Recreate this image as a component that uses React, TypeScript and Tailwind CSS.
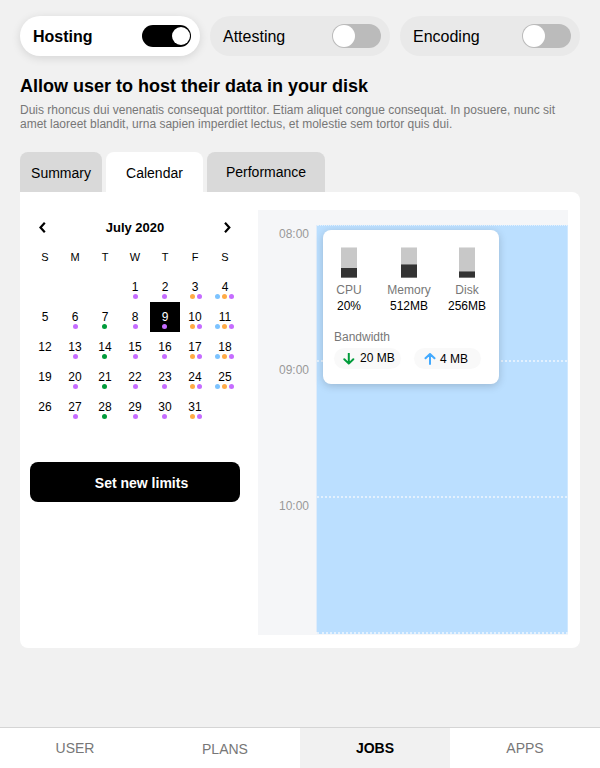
import React from "react";

const toggles = [
  { name: "Hosting", on: true },
  { name: "Attesting", on: false },
  { name: "Encoding", on: false },
];

const dotColors: Record<string, string> = {
  p: "bg-[#c56cff]",
  o: "bg-[#ffab45]",
  b: "bg-[#7cc3ff]",
  g: "bg-[#009b3a]",
};

// Dot codes per weekday, Sunday first
const weekdayDots = ["", "p", "g", "p", "p", "op", "bop"];
const dotIndent = ["", "pl-[13px]", "pl-3", "pl-[13px]", "pl-3", "pl-[10px]", "pl-[5px]"];

function Toggle({ name, on }: { name: string; on: boolean }) {
  return (
    <div
      className={`flex h-10 w-[180px] items-center rounded-full pl-[13px] text-[16px] ${
        on ? "bg-white font-bold shadow-[0_2px_10px_rgba(0,0,0,0.12)]" : "bg-[#e9e9e9]"
      }`}
    >
      <span className="flex-1 pt-px">{name}</span>
      {on ? (
        <span className="mr-[9px] flex h-[22px] w-[49px] items-center justify-end rounded-full bg-black pr-px">
          <span className="size-[18px] rounded-full bg-white" />
        </span>
      ) : (
        <span className="mr-[9px] flex h-6 w-[49px] items-center rounded-full bg-[#bbbbbb] pl-px">
          <span className="size-[22px] rounded-full bg-white" />
        </span>
      )}
    </div>
  );
}

function Calendar() {
  return (
    <div className="w-[210px]">
      <div className="flex h-[30px] items-center justify-between px-[9px] text-[13px] font-bold">
        <svg width="7" height="11" viewBox="0 0 7 11" fill="none" stroke="#000" strokeWidth="2.2">
          <path d="M5.8 0.8 1.500 5.500l4.300 4.700" />
        </svg>
        <span className="pt-px">July 2020</span>
        <svg width="7" height="11" viewBox="0 0 7 11" fill="none" stroke="#000" strokeWidth="2.2">
          <path d="M1 .8 5.300 5.500 1 10.200" />
        </svg>
      </div>
      <div className="grid h-[30px] grid-cols-7 text-center text-[11px] leading-[30px]">
        {"SMTWTFS".split("").map((d, i) => (
          <span key={i}>{d}</span>
        ))}
      </div>
      <div className="grid grid-cols-7">
        {Array.from({ length: 35 }, (_, i) => {
          const day = i - 2;
          if (day < 1 || day > 31) return <div key={i} className="h-[30px]" />;
          const col = i % 7;
          return (
            <div
              key={i}
              className={`flex h-[30px] flex-col pt-2 text-[12px] leading-[14px] ${
                day === 9 ? "bg-black text-white" : ""
              }`}
            >
              <span className="text-center">{day}</span>
              <div className={`flex gap-[2px] ${dotIndent[col]}`}>
                {weekdayDots[col].split("").map((c) => (
                  <span key={c} className={`size-[5px] rounded-full ${dotColors[c]}`} />
                ))}
              </div>
            </div>
          );
        })}
      </div>
      <button className="mt-10 flex h-10 w-full items-center justify-center rounded-lg bg-black pt-[2px] pl-[13px] text-[14px] font-bold text-white">
        Set new limits
      </button>
    </div>
  );
}

function Meter({ label, value, fill, width }: { label: string; value: string; fill: string; width: string }) {
  return (
    <div className={`flex flex-col items-center text-[12px] leading-4 ${width}`}>
      <div className="mb-1 flex h-[31px] w-4 items-end border-t border-[#e2e2e2] bg-[#c8c8c8]">
        <div className={`w-full border-b border-b-[#777] bg-[#333] ${fill}`} />
      </div>
      <span className="text-[#777]">{label}</span>
      <span>{value}</span>
    </div>
  );
}

function UsageCard() {
  return (
    <div className="absolute top-5 left-[65px] h-[154px] w-[176px] rounded-lg bg-white pt-[17px] shadow-[0_2px_8px_rgba(0,0,0,0.18)]">
      <div className="flex pl-[3px]">
        <Meter label="CPU" value="20%" fill="h-[10px]" width="w-[46px]" />
        <Meter label="Memory" value="512MB" fill="h-[14px] border-t border-t-[#777]" width="w-[74px]" />
        <Meter label="Disk" value="256MB" fill="h-[7px] border-t border-t-[#777]" width="w-[42px]" />
      </div>
      <div className="mt-[15px] pl-[11px] text-[12px] leading-4 text-[#777]">Bandwidth</div>
      <div className="mt-[3px] flex gap-[13px] pl-[11px] text-[12px]">
        <div className="flex h-[21px] w-[67px] items-center rounded-full bg-[#f9f9f9] pl-[9px]">
          <svg width="12" height="12" viewBox="0 0 12 12" fill="none" stroke="#009b3a" strokeWidth="2" strokeLinecap="round" strokeLinejoin="round">
            <path d="M5.800 0.500V10.600M1.300 6.300 5.800 10.600l4.500-4.300" />
          </svg>
          <span className="ml-[5px] pb-px">20 MB</span>
        </div>
        <div className="flex h-[21px] w-[67px] items-center rounded-full bg-[#f9f9f9] pl-[10px]">
          <svg width="12" height="12" viewBox="0 0 12 12" fill="none" stroke="#43aaff" strokeWidth="2" strokeLinecap="round" strokeLinejoin="round">
            <path d="M6 11V1M1.500 5.300 6 1l4.500 4.300" />
          </svg>
          <span className="ml-1 pt-px">4 MB</span>
        </div>
      </div>
    </div>
  );
}

const hours = [
  { time: "08:00", row: "h-[135px]", label: "pt-[2px]", line: "border-t" },
  { time: "09:00", row: "h-[136px]", label: "pt-[3px]", line: "border-t-2" },
  { time: "10:00", row: "h-[136px]", label: "pt-[3px]", line: "border-t-2" },
];

function Schedule() {
  return (
    <div className="relative h-[425px] w-[310px] bg-[#f5f6f8] pt-[15px]">
      {hours.map((h) => (
        <div key={h.time} className={`flex ${h.row}`}>
          <div className={`w-[58px] pr-[7px] text-right text-[12px] leading-[14px] text-[#999] ${h.label}`}>{h.time}</div>
          <div className="flex-1 border-r border-l border-r-[#cfe8ff] border-l-[#dfecfa] bg-[#bbdfff]">
            <div className={`border-dotted border-[#e3f1fe] ${h.line}`} />
          </div>
        </div>
      ))}
      <div className="ml-[59px] border-t-2 border-dotted border-[#e3f1fe] bg-[#bbdfff]" />
      <UsageCard />
    </div>
  );
}

export default function App() {
  return (
    <div className="flex h-[768px] w-[600px] flex-col bg-[#f1f1f1] font-['Liberation_Sans',Arial,sans-serif] text-black">
      <div className="flex gap-[10px] px-5 pt-4">
        {toggles.map((t) => (
          <Toggle key={t.name} {...t} />
        ))}
      </div>
      <h1 className="mt-5 px-5 text-[18px] leading-5 font-bold">Allow user to host their data in your disk</h1>
      <p className="mt-[7px] px-5 text-[12px] leading-[14px] text-[#777]">
        Duis rhoncus dui venenatis consequat porttitor. Etiam aliquet congue consequat. In posuere, nunc sit
        <br />
        amet laoreet blandit, urna sapien imperdiet lectus, et molestie sem tortor quis dui.
      </p>
      <div className="mt-[21px] flex h-10 gap-1 px-5 text-center text-[14px] leading-[42px]">
        <div className="w-[82px] rounded-t-lg bg-[#d9d9d9]">Summary</div>
        <div className="w-[97px] rounded-t-lg bg-white">Calendar</div>
        <div className="w-[118px] rounded-t-lg bg-[#d9d9d9] leading-10">Performance</div>
      </div>
      <div className="mx-5 flex h-[456px] justify-between rounded-b-lg rounded-tr-lg bg-white pt-[18px] pr-3 pl-[10px]">
        <div className="pt-[2px]">
          <Calendar />
        </div>
        <Schedule />
      </div>
      <nav className="mt-auto grid h-[41px] grid-cols-4 border-t border-[#d5d5d5] bg-white text-center text-[14px] leading-10 text-[#777]">
        <span>USER</span>
        <span className="pt-px">PLANS</span>
        <span className="bg-[#f1f1f1] font-bold text-black">JOBS</span>
        <span>APPS</span>
      </nav>
    </div>
  );
}
